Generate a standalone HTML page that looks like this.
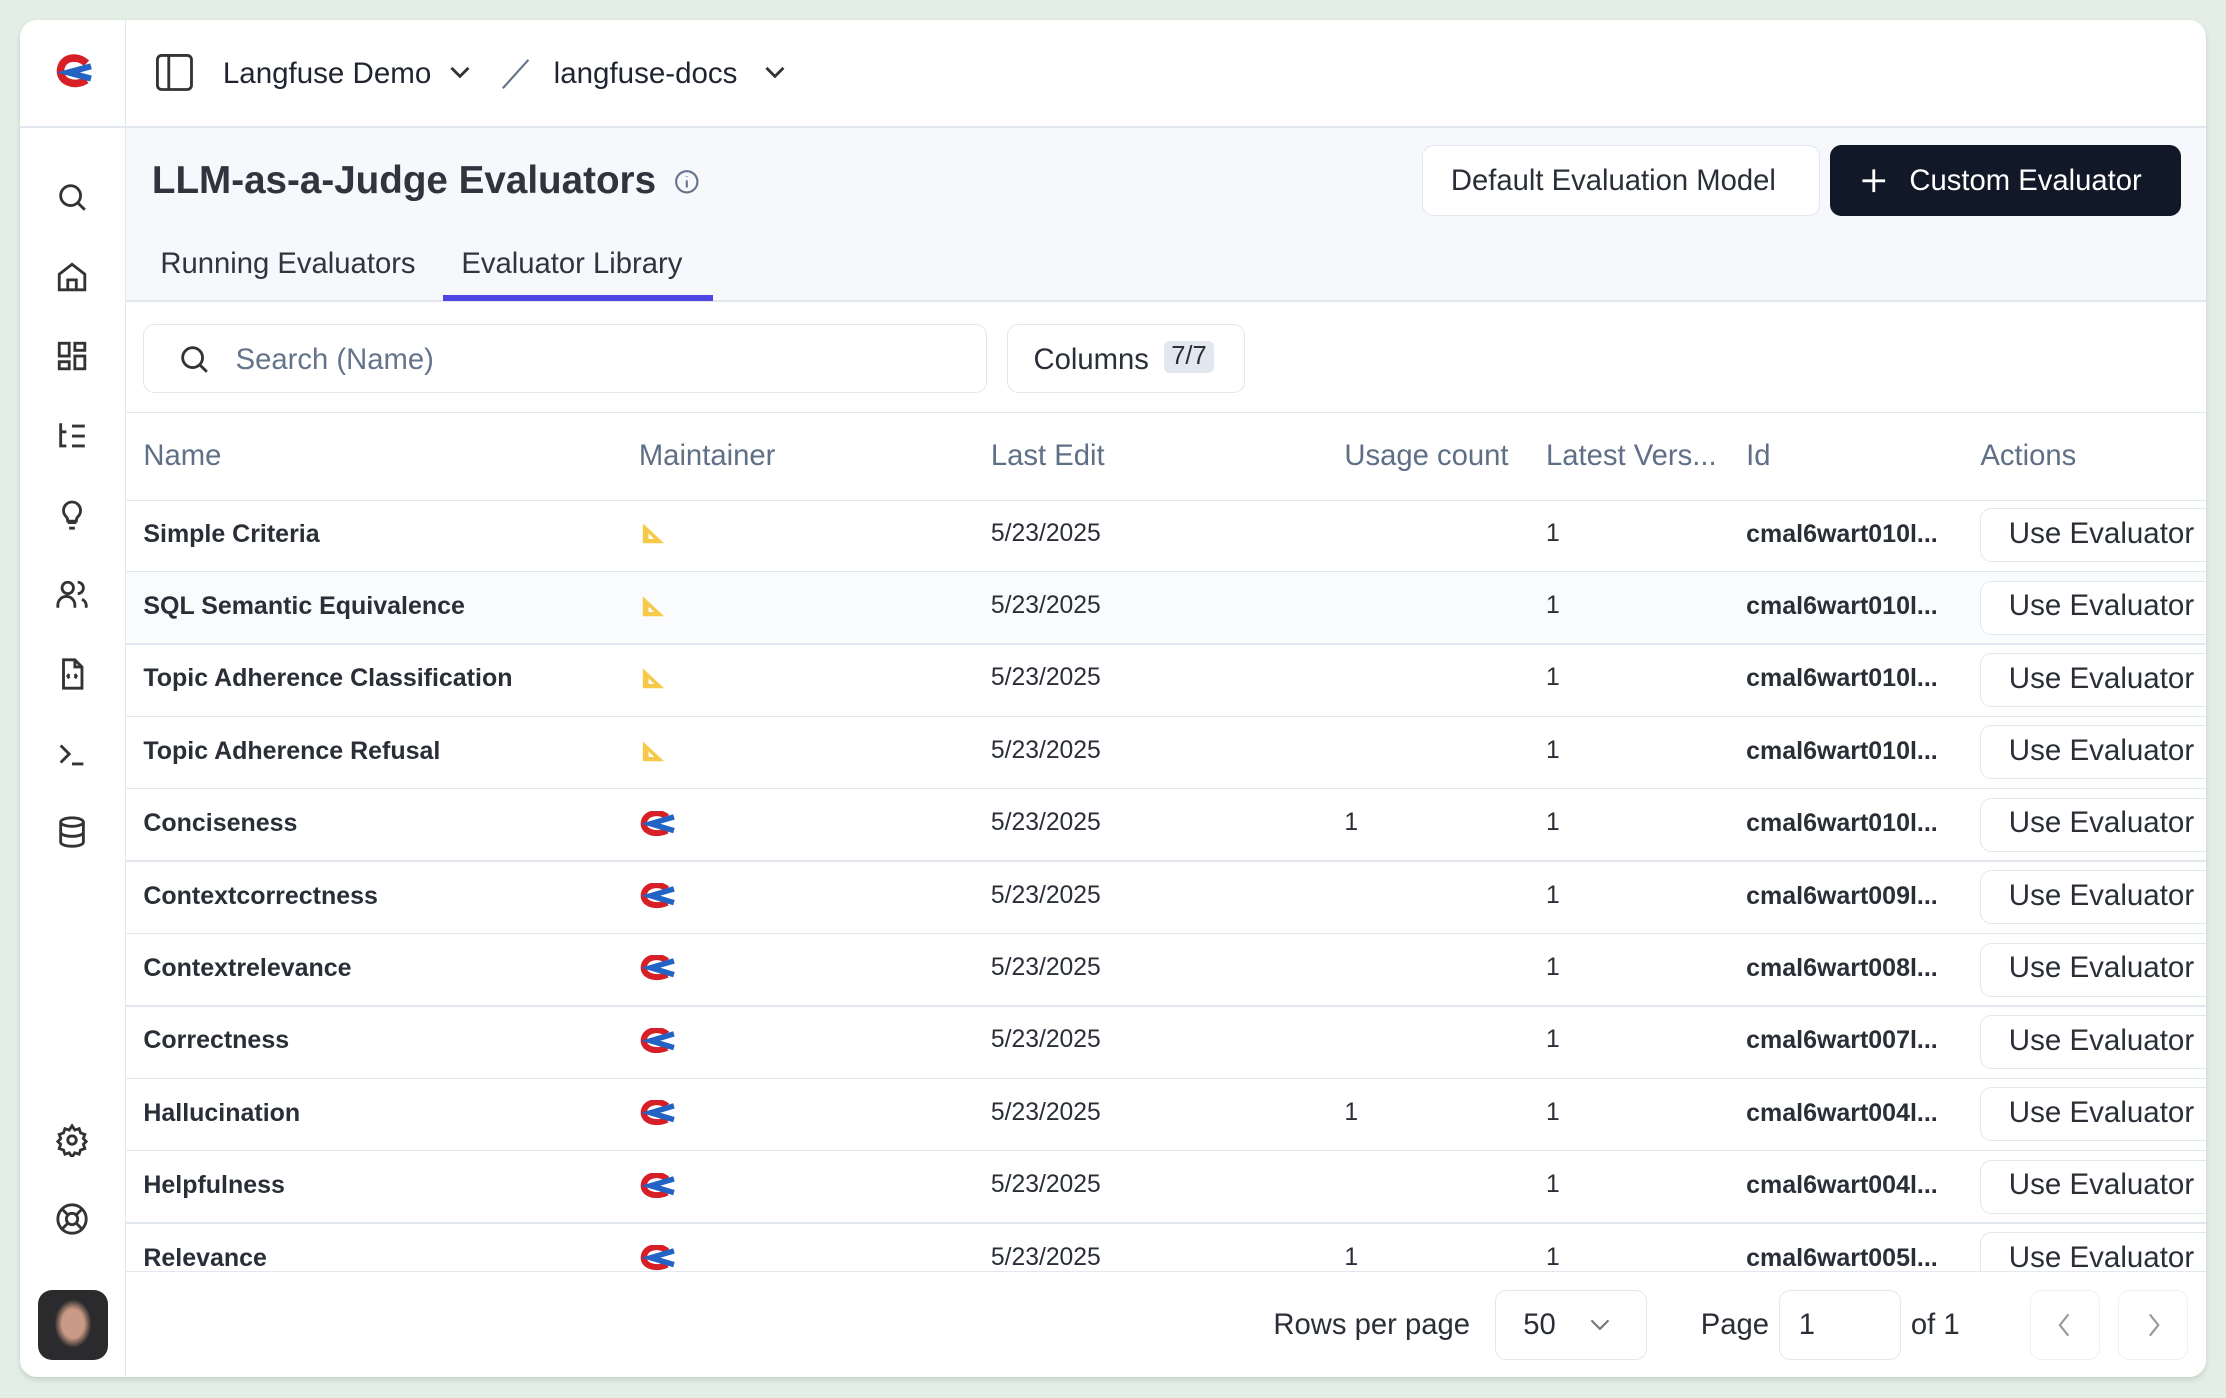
<!DOCTYPE html>
<html><head><meta charset="utf-8"><style>
*{box-sizing:border-box;margin:0;padding:0}
html,body{width:2226px;height:1398px;overflow:hidden;background:#e2eee6}
#w{zoom:1.419643;position:relative;width:1568px;height:985px;font-family:"Liberation Sans",Arial,sans-serif;color:#1f2430}
.card{position:absolute;left:14px;top:14px;width:1540px;height:956px;background:#fff;border-radius:12px;overflow:hidden;box-shadow:0 2px 4px rgba(0,0,0,.12)}
.a{position:absolute}
.sb{left:0;top:0;width:75px;height:956px;border-right:1px solid #e3e7ef}
.ic{position:absolute;left:25px;width:24px;height:24px}
.t{position:absolute;white-space:nowrap}
.hd{color:#5f6f86;font-size:20.6px}
.nm{font-weight:bold;font-size:17.6px;color:#2a2e37}
.cell{font-size:17.4px;color:#2a2e37}
.btn{position:absolute;border:1px solid #e3e7ef;border-radius:8px;background:#fff}
.row{position:absolute;left:75px;width:1465px;height:1px;background:#e3e7ef}
</style></head><body><div id="w">
<div class="card">
 <div class="a sb">
  <svg class="ic" style="top:24px;left:23px;width:30px;height:26px" viewBox="0 0 28 24"><path d="M22 6 C16 0 6 2 5 10 C4 18 14 22 22 17" fill="none" stroke="#d61f26" stroke-width="5"/><path d="M25 8 L10 12 L25 16" fill="none" stroke="#2263c3" stroke-width="4"/></svg>
  <svg class="ic" style="top:113px" viewBox="0 0 24 24" fill="none" stroke="#333" stroke-width="2"><circle cx="11" cy="11" r="7"/><path d="M16 16l5 5"/></svg>
  <svg class="ic" style="top:169px" viewBox="0 0 24 24" fill="none" stroke="#333" stroke-width="2"><path d="M3 10l9-7 9 7v11H3z"/><path d="M9 21v-7h6v7"/></svg>
  <svg class="ic" style="top:225px" viewBox="0 0 24 24" fill="none" stroke="#333" stroke-width="2"><rect x="3" y="3" width="7" height="9"/><rect x="14" y="3" width="7" height="5"/><rect x="14" y="12" width="7" height="9"/><rect x="3" y="16" width="7" height="5"/></svg>
  <svg class="ic" style="top:281px" viewBox="0 0 24 24" fill="none" stroke="#333" stroke-width="2"><path d="M4 3v16h4M4 9h4M12 5h9M12 12h9M12 19h9"/></svg>
  <svg class="ic" style="top:336px" viewBox="0 0 24 24" fill="none" stroke="#333" stroke-width="2"><path d="M9 18h6M10 22h4M8 14a6 6 0 1 1 8 0c-1 1-1 2-1 3H9c0-1 0-2-1-3z"/></svg>
  <svg class="ic" style="top:393px" viewBox="0 0 24 24" fill="none" stroke="#333" stroke-width="2"><circle cx="9" cy="7" r="4"/><path d="M2 21v-2a6 6 0 0 1 12 0v2M16 3a4 4 0 0 1 0 8M22 21v-2a5 5 0 0 0-3-4"/></svg>
  <svg class="ic" style="top:449px" viewBox="0 0 24 24" fill="none" stroke="#333" stroke-width="2"><path d="M14 2H6v20h13V7z M14 2v5h5"/><path d="M10 12l-1 1.5 1 1.5M14 12l1 1.5-1 1.5"/></svg>
  <svg class="ic" style="top:505px" viewBox="0 0 24 24" fill="none" stroke="#333" stroke-width="2"><path d="M4 6l6 6-6 6M12 19h8"/></svg>
  <svg class="ic" style="top:560px" viewBox="0 0 24 24" fill="none" stroke="#333" stroke-width="2"><ellipse cx="12" cy="5" rx="8" ry="3"/><path d="M4 5v14c0 2 4 3 8 3s8-1 8-3V5M4 12c0 2 4 3 8 3s8-1 8-3"/></svg>
  <svg class="ic" style="top:777px" viewBox="0 0 24 24" fill="none" stroke="#333" stroke-width="2"><circle cx="12" cy="12" r="3"/><path d="M12 2l2 3 3-1 1 3 3 1-1 3 2 2-2 2 1 3-3 1-1 3-3-1-2 3-2-3-3 1-1-3-3-1 1-3-2-2 2-2-1-3 3-1 1-3 3 1z"/></svg>
  <svg class="ic" style="top:833px" viewBox="0 0 24 24" fill="none" stroke="#333" stroke-width="2"><circle cx="12" cy="12" r="10"/><circle cx="12" cy="12" r="4"/><path d="M5 5l4 4M15 15l4 4M19 5l-4 4M9 15l-4 4"/></svg>
  <div class="a" style="left:13px;top:895px;width:49px;height:49px;border-radius:10px;background:radial-gradient(ellipse 13px 17px at 50% 48%,#c99a85 60%,#2b2a2c 100%)"></div>
 </div>
 <div class="a" style="left:75px;top:75px;width:1465px;height:1px;background:#e3e7ef"></div>
 <div class="a" style="left:0;top:75px;width:75px;height:1px;background:#e3e7ef"></div>
 <svg class="a" style="left:96px;top:24px" width="26" height="26" viewBox="0 0 26 26" fill="none" stroke="#333" stroke-width="2"><rect x="1" y="1" width="24" height="24" rx="3"/><path d="M9 1v24"/></svg>
 <div class="t" style="left:143px;top:26px;font-size:20.8px">Langfuse Demo</div>
 <svg class="a" style="left:303px;top:32px" width="14" height="10" viewBox="0 0 14 10" fill="none" stroke="#333" stroke-width="2"><path d="M1 2l6 6 6-6"/></svg>
 <svg class="a" style="left:338px;top:26px" width="22" height="24"><path d="M2 22L20 2" stroke="#64748b" stroke-width="1.5"/></svg>
 <div class="t" style="left:376px;top:26px;font-size:20.8px">langfuse-docs</div>
 <svg class="a" style="left:525px;top:32px" width="14" height="10" viewBox="0 0 14 10" fill="none" stroke="#333" stroke-width="2"><path d="M1 2l6 6 6-6"/></svg>
 <div class="a" style="left:75px;top:76px;width:1465px;height:123px;background:#f6f8fb;border-bottom:2px solid #e3e7ef"></div>
 <div class="t" style="left:93px;top:98px;font-size:27.2px;font-weight:bold;color:#2f343d">LLM-as-a-Judge Evaluators</div>
 <svg class="a" style="left:461px;top:105px" width="18" height="18" viewBox="0 0 18 18" fill="none" stroke="#64748b" stroke-width="1.5"><circle cx="9" cy="9" r="7.5"/><path d="M9 8v5M9 5v.5"/></svg>
 <div class="btn" style="left:988px;top:88px;width:280px;height:50px"></div>
 <div class="t" style="left:1008px;top:102px;font-size:20.6px;color:#2a2e37">Default Evaluation Model</div>
 <div class="a" style="left:1275px;top:88px;width:247px;height:50px;background:#111827;border-radius:8px"></div>
 <svg class="a" style="left:1297px;top:104px" width="18" height="18" fill="none" stroke="#fff" stroke-width="2"><path d="M9 1v16M1 9h16"/></svg>
 <div class="t" style="left:1331px;top:102px;font-size:20.6px;color:#fff">Custom Evaluator</div>
 <div class="t" style="left:99px;top:161px;font-size:20.6px;color:#2f343d">Running Evaluators</div>
 <div class="t" style="left:311px;top:161px;font-size:20.6px;color:#2f343d">Evaluator Library</div>
 <div class="a" style="left:298px;top:194px;width:190px;height:4px;background:#4f46e5"></div>
 <div class="btn" style="left:87px;top:214px;width:594px;height:49px"></div>
 <svg class="a" style="left:111px;top:227px" width="24" height="24" viewBox="0 0 24 24" fill="none" stroke="#333" stroke-width="2"><circle cx="11" cy="11" r="7"/><path d="M16 16l5 5"/></svg>
 <div class="t" style="left:152px;top:228px;font-size:20.6px;color:#64748b">Search (Name)</div>
 <div class="btn" style="left:695px;top:214px;width:168px;height:49px"></div>
 <div class="t" style="left:714px;top:228px;font-size:20.6px;color:#2a2e37">Columns</div>
 <div class="t" style="left:806px;top:226px;font-size:18px;background:#e3e7ef;border-radius:4px;padding:1px 5px;color:#2a2e37">7/7</div>
 <div class="row" style="top:276px"></div>
 <div class="t hd" style="left:87px;top:296px">Name</div>
 <div class="t hd" style="left:436px;top:296px">Maintainer</div>
 <div class="t hd" style="left:684px;top:296px">Last Edit</div>
 <div class="t hd" style="left:933px;top:296px">Usage count</div>
 <div class="t hd" style="left:1075px;top:296px">Latest Vers...</div>
 <div class="t hd" style="left:1216px;top:296px">Id</div>
 <div class="t hd" style="left:1381px;top:296px">Actions</div>
 <div class="row" style="top:338px"></div>
 <div class="a" style="left:75px;top:388px;width:1465px;height:50px;background:#fafbfd"></div>
 <div id="rows"></div>
 <div class="a" style="left:75px;top:881px;width:1465px;height:75px;background:#fff;border-top:1px solid #e3e7ef"></div>
 <div class="t" style="left:883px;top:908px;font-size:20.6px;color:#2a2e37">Rows per page</div>
 <div class="btn" style="left:1039px;top:895px;width:107px;height:49px"></div>
 <div class="t" style="left:1059px;top:908px;font-size:20.6px;color:#2a2e37">50</div>
 <svg class="a" style="left:1106px;top:915px" width="14" height="9" viewBox="0 0 14 9" fill="none" stroke="#777" stroke-width="1.5"><path d="M1 1l6 6 6-6"/></svg>
 <div class="t" style="left:1184px;top:908px;font-size:20.6px;color:#2a2e37">Page</div>
 <div class="btn" style="left:1239px;top:895px;width:86px;height:49px"></div>
 <div class="t" style="left:1253px;top:908px;font-size:20.6px;color:#2a2e37">1</div>
 <div class="t" style="left:1332px;top:908px;font-size:20.6px;color:#2a2e37">of 1</div>
 <div class="btn" style="left:1416px;top:895px;width:49px;height:49px;border-color:#eef0f4"></div>
 <div class="btn" style="left:1478px;top:895px;width:49px;height:49px;border-color:#eef0f4"></div>
 <svg class="a" style="left:1435px;top:911px" width="10" height="17" fill="none" stroke="#999" stroke-width="1.5"><path d="M8 1L2 8.5 8 16"/></svg>
 <svg class="a" style="left:1498px;top:911px" width="10" height="17" fill="none" stroke="#999" stroke-width="1.5"><path d="M2 1l6 7.5L2 16"/></svg>
</div>
</div>
<script>
var d=[["Simple Criteria",0,"","cmal6wart010l..."],["SQL Semantic Equivalence",0,"","cmal6wart010l..."],["Topic Adherence Classification",0,"","cmal6wart010l..."],["Topic Adherence Refusal",0,"","cmal6wart010l..."],["Conciseness",1,"1","cmal6wart010l..."],["Contextcorrectness",1,"","cmal6wart009l..."],["Contextrelevance",1,"","cmal6wart008l..."],["Correctness",1,"","cmal6wart007l..."],["Hallucination",1,"1","cmal6wart004l..."],["Helpfulness",1,"","cmal6wart004l..."],["Relevance",1,"1","cmal6wart005l..."]];
var h="";for(var i=0;i<d.length;i++){var y=338+i*51,ty=y+24;
h+='<div class="t nm" style="left:87px;top:'+(ty-10)+'px">'+d[i][0]+'</div>';
if(d[i][1]==0)h+='<svg class="a" style="left:437px;top:'+(ty-8)+'px" width="18" height="16"><path d="M2 1L17 15H2z M6 8v4h4z" fill="#f7c948" fill-rule="evenodd"/></svg>';
else h+='<svg class="a" style="left:435px;top:'+(ty-9)+'px" width="27" height="18" viewBox="0 0 28 18"><path d="M22 4C16-1 6 1 5 8c-1 7 9 10 17 6" fill="none" stroke="#d61f26" stroke-width="4.5"/><path d="M27 4L10 9l17 5" fill="none" stroke="#2263c3" stroke-width="4"/></svg>';
h+='<div class="t cell" style="left:684px;top:'+(ty-10)+'px">5/23/2025</div>';
if(d[i][2])h+='<div class="t cell" style="left:933px;top:'+(ty-10)+'px">1</div>';
h+='<div class="t cell" style="left:1075px;top:'+(ty-10)+'px">1</div>';
h+='<div class="t nm" style="left:1216px;top:'+(ty-10)+'px">'+d[i][3]+'</div>';
h+='<div class="btn" style="left:1381px;top:'+(ty-18)+'px;width:175px;height:38px"></div><div class="t" style="left:1401px;top:'+(ty-12)+'px;font-size:20.8px;color:#2a2e37">Use Evaluator</div>';
if(i<10)h+='<div class="row" style="top:'+(y+50)+'px"></div>';}
document.getElementById("rows").outerHTML=h;
</script>
</body></html>
